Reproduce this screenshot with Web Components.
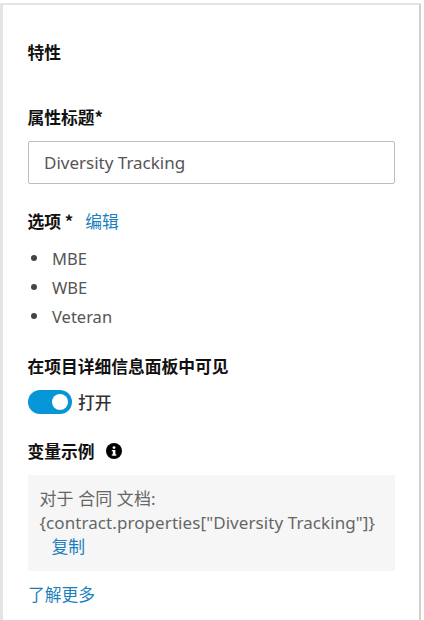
<!DOCTYPE html>
<html><head><meta charset="utf-8">
<style>
html,body{margin:0;padding:0;background:#fff;height:620px;overflow:hidden}
body{font-family:"Noto Sans","Noto Sans CJK SC",sans-serif}
</style></head><body>
<template id="t-panel"><style>
:host{display:block;box-sizing:border-box;width:421px;height:617px;margin-top:3px;border-top:2px solid #e4e4e4;border-left:3px solid #e4e4e4;border-right:2px solid #d0d0d0;padding:0 25px;background:#fff;color:#111}
</style><slot></slot></template>

<template id="t-label"><style>
:host{display:flex;align-items:center;margin-left:-.5px;font-weight:700;font-size:16.75px;line-height:20px;color:#111;font-family:"Noto Sans CJK SC","Noto Sans",sans-serif}
</style><slot></slot></template>

<template id="t-input"><style>
:host{display:flex;align-items:center;box-sizing:border-box;height:43px;width:367px;border:1px solid #bdbdbd;border-radius:2px;padding:0 15px;font-size:17px;color:#555;font-family:"Noto Sans","Noto Sans CJK SC",sans-serif}
</style><slot></slot></template>

<template id="t-link"><style>
:host{display:inline-block;color:#1c7fbd;font-size:16.75px;line-height:20px;font-weight:400;font-family:"Noto Sans CJK SC","Noto Sans",sans-serif}
</style><slot></slot></template>

<template id="t-list"><style>
:host{display:flex;flex-direction:column;gap:9px}
</style><slot></slot></template>

<template id="t-item"><style>
:host{display:flex;align-items:center;height:20px;font-size:16.5px;color:#555}
i{width:6px;height:6px;border-radius:50%;background:#444;margin:0 15px 0 3px;flex:none}
</style><i></i><slot></slot></template>

<template id="t-toggle"><style>
:host{display:flex;align-items:center;gap:6px;font-size:16.75px;font-weight:500;color:#333;font-family:"Noto Sans CJK SC","Noto Sans",sans-serif}
.track{box-sizing:border-box;width:44px;height:24px;border-radius:12px;background:#0696d7;display:flex;align-items:center;justify-content:flex-end;padding-right:4px}
.knob{width:16px;height:16px;border-radius:50%;background:#fff}
</style><span class="track"><span class="knob"></span></span><slot></slot></template>

<template id="t-box"><style>
:host{display:block;box-sizing:border-box;width:367px;height:96px;background:#f6f6f6;padding:12px 11.5px 0;font-size:17px;letter-spacing:.08px;line-height:24px;color:#666}
</style><slot></slot></template>

<script>
for(const [n,id] of [['ui-panel','t-panel'],['ui-label','t-label'],['ui-input','t-input'],['ui-link','t-link'],['ui-list','t-list'],['ui-item','t-item'],['ui-toggle','t-toggle'],['ui-box','t-box']]){
 customElements.define(n,class extends HTMLElement{constructor(){super();this.attachShadow({mode:'open'}).appendChild(document.getElementById(id).content.cloneNode(true))}});
}
</script>

<ui-panel>
 <ui-label style="margin-top:37px">特性</ui-label>
 <ui-label style="margin-top:45px">属性标题*</ui-label>
 <ui-input style="margin-top:14px">Diversity Tracking</ui-input>
 <ui-label style="margin-top:27px">选项 *<ui-link style="margin-left:12px">编辑</ui-link></ui-label>
 <ui-list style="margin-top:17px">
  <ui-item>MBE</ui-item><ui-item>WBE</ui-item><ui-item>Veteran</ui-item>
 </ui-list>
 <ui-label style="margin-top:30px">在项目详细信息面板中可见</ui-label>
 <ui-toggle style="margin-top:14px">打开</ui-toggle>
 <ui-label style="margin-top:27px">变量示例<svg style="margin-left:11px" width="16" height="16" viewBox="0 0 16 16"><circle cx="8" cy="8" r="8" fill="#000"/><rect x="6.8" y="7" width="2.6" height="5.4" fill="#fff"/><rect x="5.8" y="7" width="2" height="1.2" fill="#fff"/><rect x="5.8" y="11.4" width="4.6" height="1.2" fill="#fff"/><circle cx="8" cy="4.6" r="1.4" fill="#fff"/></svg></ui-label>
 <ui-box style="margin-top:14px">对于 合同 文档:<br>{contract.properties["Diversity Tracking"]}<br><ui-link style="margin-left:12px">复制</ui-link></ui-box>
 <ui-link style="margin-top:13px">了解更多</ui-link>
</ui-panel>
</body></html>
